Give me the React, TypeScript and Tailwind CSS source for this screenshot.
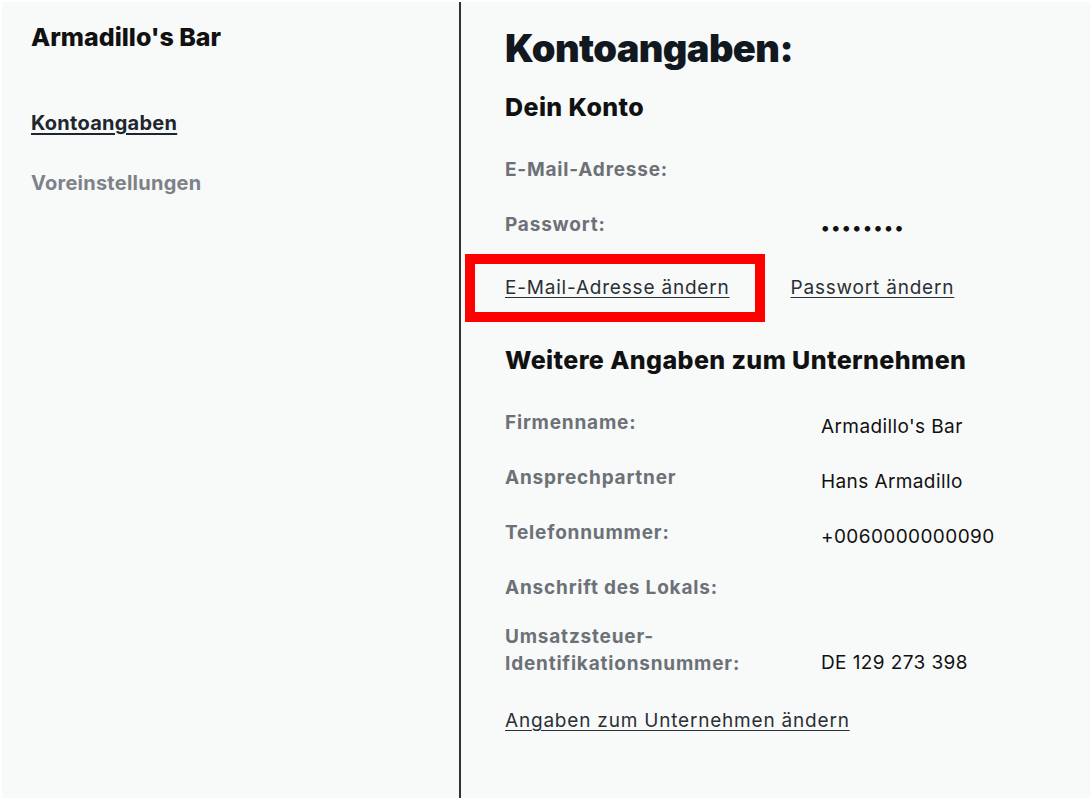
import React from "react";

const rows = [
  { label: "Firmenname:", value: "Armadillo's Bar" },
  { label: "Ansprechpartner", value: "Hans Armadillo" },
  { label: "Telefonnummer:", value: "+0060000000090" },
  { label: "Anschrift des Lokals:", value: "" },
];

const labelCls = "text-[19px] font-bold text-[#6c7177] tracking-[0.8px] leading-[24px]";
const valueCls = "text-[19px] text-[#111] tracking-[0.4px] leading-[24px]";
const linkCls = "text-[19px] text-[#2b3035] underline underline-offset-[3px] leading-[26px] tracking-[0.8px]";

export default function App() {
  return (
    <div className="w-full h-[800px] bg-white p-[2px] font-['Inter','Liberation_Sans',sans-serif]">
      <div className="h-full bg-[#f8f9f9] flex">
        {/* sidebar */}
        <aside className="w-[459px] shrink-0 border-r-2 border-[#2d3339] pl-[29px] pt-[20px]">
          <h2 className="text-[25px] font-extrabold text-[#111] leading-[30px]">
            Armadillo's Bar
          </h2>
          <nav className="mt-[58px] flex flex-col gap-[34px]">
            <a className="text-[20px] font-bold text-[#1e262e] underline underline-offset-[3px] leading-[26px] tracking-[0.25px]">
              Kontoangaben
            </a>
            <a className="text-[20px] font-bold text-[#7d8288] leading-[26px] tracking-[0.25px]">
              Voreinstellungen
            </a>
          </nav>
        </aside>

        {/* content */}
        <main className="flex-1 pl-[44px] pt-[22px]">
          <h1 className="text-[38px] font-black text-[#121820] tracking-[-0.6px] leading-[48px]">
            Kontoangaben:
          </h1>

          <h3 className="mt-[20px] text-[25px] font-extrabold text-[#111] tracking-[0.4px] leading-[30px]">
            Dein Konto
          </h3>

          <div className="mt-[36px] grid grid-cols-[316px_1fr] gap-y-[28px] items-center">
            <span className={labelCls}>E-Mail-Adresse:</span>
            <span />
            <span className={labelCls}>Passwort:</span>
            <span className="text-[18px] font-bold text-[#111] tracking-[2px] leading-[24px] pt-[6px]">
              ••••••••
            </span>
          </div>

          <div className="mt-[14px] flex items-center">
            <div className="-ml-[40px] border-[10px] border-[#ff0000] pl-[30px] pr-[25px] py-[11px]">
              <a className={linkCls}>E-Mail-Adresse ändern</a>
            </div>
            <a className={`ml-[26px] ${linkCls}`}>Passwort ändern</a>
          </div>

          <h3 className="mt-[23px] text-[25px] font-extrabold text-[#111] tracking-[0.4px] leading-[30px]">
            Weitere Angaben zum Unternehmen
          </h3>

          <div className="mt-[36px] flex flex-col gap-[27px]">
            {rows.map((r) => (
              <div key={r.label} className="grid grid-cols-[316px_1fr] items-start">
                <span className={labelCls}>{r.label}</span>
                <span className={`mt-[4px] ${valueCls}`}>{r.value}</span>
              </div>
            ))}
            <div className="-mt-[4px] grid grid-cols-[316px_1fr] items-end">
              <span className={`${labelCls} leading-[27px]`}>
                Umsatzsteuer-
                <br />
                Identifikationsnummer:
              </span>
              <span className={`${valueCls} pb-[2px]`}>DE 129 273 398</span>
            </div>
          </div>

          <a className={`mt-[31px] inline-block ${linkCls}`}>
            Angaben zum Unternehmen ändern
          </a>
        </main>
      </div>
    </div>
  );
}
